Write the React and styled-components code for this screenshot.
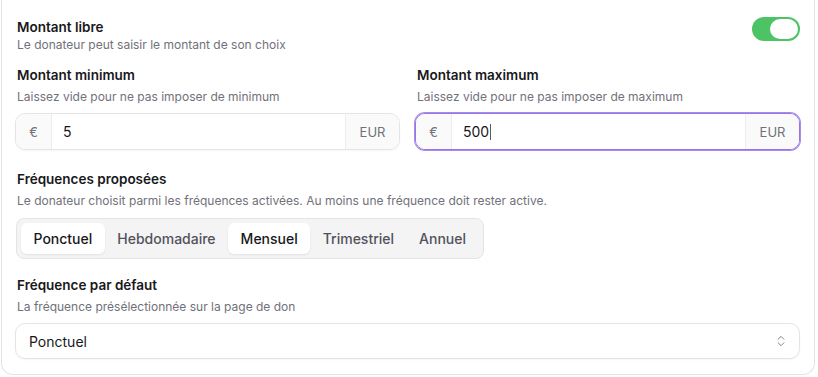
import React from 'react';
import styled, { createGlobalStyle } from 'styled-components';
import { ChevronsUpDown } from 'lucide-react';

const GlobalStyle = createGlobalStyle`
  html, body {
    margin: 0;
    padding: 0;
    background: #ffffff;
  }
  body {
    font-family: Inter, "Noto Sans", sans-serif;
    color: #18181b;
    -webkit-font-smoothing: antialiased;
  }
`;

const Card = styled.div`
  width: 814px;
  margin-left: 1px;
  box-sizing: border-box;
  border: 1px solid #e4e4e7;
  border-top: none;
  border-radius: 0 0 12px 12px;
  padding: 17px 14px 15px 13px;
  display: flex;
  flex-direction: column;
`;

const HeaderRow = styled.div`
  display: flex;
  justify-content: space-between;
  align-items: flex-start;
  margin-bottom: 12px;
`;

const Title = styled.div`
  font-size: 13.5px;
  font-weight: 600;
  line-height: 20px;
  color: #18181b;
  padding-left: 2px;
`;

const Desc = styled.div`
  font-size: 12px;
  line-height: 16px;
  color: #71717a;
  margin-top: ${p => (p.$tight ? '0px' : '4px')};
  padding-left: 2px;
`;

const Toggle = styled.div`
  width: 48px;
  height: 24px;
  border-radius: 12px;
  background: #4cc365;
  box-sizing: border-box;
  padding: 2px;
  display: flex;
  justify-content: flex-end;
  &::after {
    content: '';
    width: 28px;
    height: 20px;
    border-radius: 10px;
    background: #ffffff;
  }
`;

const TwoCols = styled.div`
  display: grid;
  grid-template-columns: 1fr 1fr;
  gap: 15px;
  margin-bottom: 19px;
`;

const Field = styled.div`
  display: flex;
  flex-direction: column;
  margin-bottom: ${p => p.$mb || '0px'};
`;

const InputGroup = styled.div`
  margin-top: 8px;
  height: 37px;
  box-sizing: border-box;
  display: flex;
  align-items: stretch;
  border-radius: 10px;
  overflow: hidden;
  border: 1px solid ${p => (p.$focused ? '#9874e4' : '#e4e4e7')};
  box-shadow: ${p => (p.$focused ? '0 0 0 1px #a98bea' : '0 1px 2px rgba(0,0,0,0.04)')};
`;

const Addon = styled.div`
  display: flex;
  align-items: center;
  justify-content: center;
  background: #fafafa;
  color: #71717a;
  font-size: 13px;
  width: ${p => p.$w};
  border-left: ${p => (p.$right ? '1px solid #ececee' : 'none')};
  border-right: ${p => (p.$right ? 'none' : '1px solid #ececee')};
`;

const Value = styled.div`
  flex: 1;
  display: flex;
  align-items: center;
  padding-left: 11px;
  font-size: 14px;
  color: #18181b;
`;

const Caret = styled.span`
  display: inline-block;
  width: 1px;
  height: 16px;
  background: #333;
  margin-left: 1px;
  opacity: 0.8;
`;

const Segmented = styled.div`
  margin-top: 9px;
  align-self: flex-start;
  margin-left: 1px;
  display: flex;
  padding: 4px;
  background: #f4f4f5;
  border: 1px solid #e4e4e7;
  border-radius: 8px;
  height: 41px;
  box-sizing: border-box;
`;

const Segment = styled.div`
  display: flex;
  align-items: center;
  padding: 0 12.5px;
  font-size: 14px;
  font-weight: 500;
  border-radius: 6px;
  color: ${p => (p.$active ? '#18181b' : '#52525b')};
  background: ${p => (p.$active ? '#ffffff' : 'transparent')};
  box-shadow: ${p => (p.$active ? '0 1px 2px rgba(0,0,0,0.08)' : 'none')};
`;

const Select = styled.div`
  margin-top: 8px;
  height: 36px;
  box-sizing: border-box;
  border: 1px solid #e4e4e7;
  border-radius: 10px;
  display: flex;
  align-items: center;
  justify-content: space-between;
  padding: 0 11px 0 13px;
  font-size: 14px;
  color: #18181b;
  box-shadow: 0 1px 2px rgba(0,0,0,0.04);
  svg {
    color: #71717a;
  }
`;

const frequencies = [
  { label: 'Ponctuel', active: true },
  { label: 'Hebdomadaire', active: false },
  { label: 'Mensuel', active: true },
  { label: 'Trimestriel', active: false },
  { label: 'Annuel', active: false },
];

const AmountInput = ({ value, focused }) => (
  <InputGroup $focused={focused}>
    <Addon $w="35px">€</Addon>
    <Value>
      {value}
      {focused && <Caret />}
    </Value>
    <Addon $w="53px" $right>EUR</Addon>
  </InputGroup>
);

export default function App() {
  return (
    <>
      <GlobalStyle />
      <Card>
        <HeaderRow>
          <div>
            <Title>Montant libre</Title>
            <Desc $tight>Le donateur peut saisir le montant de son choix</Desc>
          </div>
          <Toggle />
        </HeaderRow>

        <TwoCols>
          <Field>
            <Title>Montant minimum</Title>
            <Desc>Laissez vide pour ne pas imposer de minimum</Desc>
            <AmountInput value="5" />
          </Field>
          <Field>
            <Title>Montant maximum</Title>
            <Desc>Laissez vide pour ne pas imposer de maximum</Desc>
            <AmountInput value="500" focused />
          </Field>
        </TwoCols>

        <Field $mb="16px">
          <Title>Fréquences proposées</Title>
          <Desc>Le donateur choisit parmi les fréquences activées. Au moins une fréquence doit rester active.</Desc>
          <Segmented>
            {frequencies.map(f => (
              <Segment key={f.label} $active={f.active}>{f.label}</Segment>
            ))}
          </Segmented>
        </Field>

        <Field>
          <Title>Fréquence par défaut</Title>
          <Desc>La fréquence présélectionnée sur la page de don</Desc>
          <Select>
            <span>Ponctuel</span>
            <ChevronsUpDown size={14} strokeWidth={1.5} />
          </Select>
        </Field>
      </Card>
    </>
  );
}
